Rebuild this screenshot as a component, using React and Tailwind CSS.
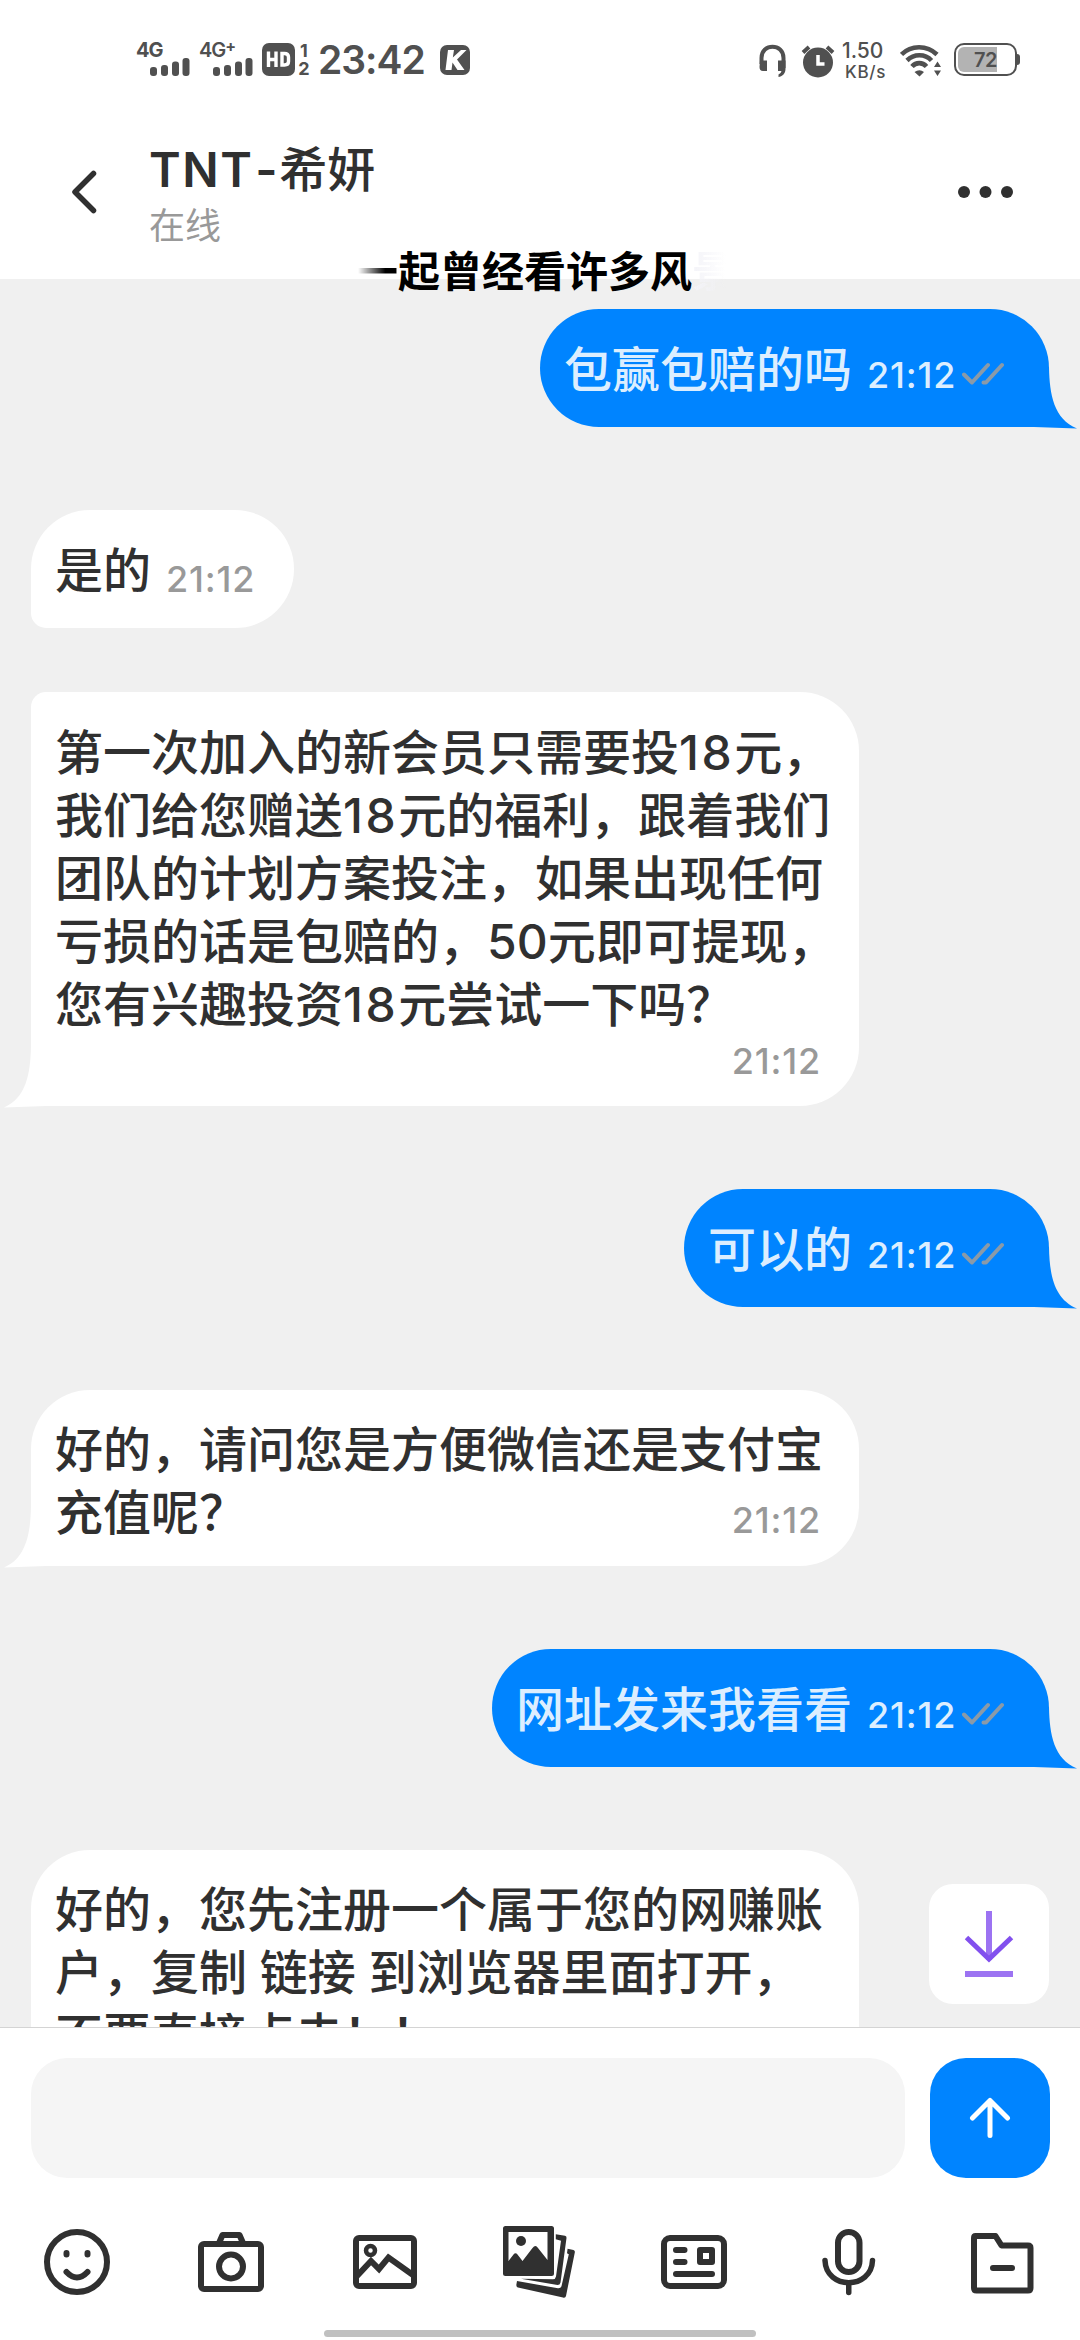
import React from "react";

const FONT = "font-[Inter,'Noto_Sans_CJK_SC',sans-serif]";

function Signal() {
  return (
    <svg className="block h-[18px] w-[40px]" viewBox="0 0 40 18" fill="#505050">
      <rect x="0" y="9" width="7" height="9" rx="3" />
      <rect x="11" y="7" width="7" height="11" rx="3" />
      <rect x="22" y="3.5" width="7" height="14.5" rx="3" />
      <rect x="32.5" y="0" width="7" height="18" rx="3" />
    </svg>
  );
}

function StatusBar() {
  return (
    <div className="flex h-[120px] items-start pl-[136px] pr-[60px] pt-[42px] text-[#505050]">
      <div className="h-[36px] w-[54px] shrink-0">
        <div className="h-4 whitespace-nowrap text-[20px] font-bold leading-4 tracking-[-1px]">4G</div>
        <div className="pl-[14px]"><Signal /></div>
      </div>
      <div className="ml-[9px] h-[36px] w-[54px] shrink-0">
        <div className="flex h-4 whitespace-nowrap text-[20px] font-semibold leading-4 tracking-[-1px]">
          4G<span className="-mt-1 text-[16px] font-bold">+</span>
        </div>
        <div className="pl-[14px]"><Signal /></div>
      </div>
      <svg className="ml-[9px] mt-px block h-[33px] w-[33px] shrink-0" viewBox="0 0 33 33">
        <rect width="33" height="33" rx="7" fill="#505050" />
        <path d="M6.5 8.5V24M14 8.5V24M6.5 16.5H14M20 10.5V22H22.5Q26.5 22 26.5 18.5V14Q26.5 10.5 22.5 10.5Z" fill="none" stroke="#fff" strokeWidth="3.4" />
      </svg>
      <div className="ml-[3px] flex w-3 flex-col items-center text-[18px] font-bold leading-[18px]">
        <span>1</span>
        <span>2</span>
      </div>
      <div className="ml-[8px] w-[122px] shrink-0 whitespace-nowrap text-[39px] font-semibold leading-[35px] tracking-[-1px]">23:42</div>
      <svg className="mt-[3px] block h-[30px] w-[30px] shrink-0" viewBox="0 0 30 30">
        <rect width="30" height="30" rx="7" fill="#505050" />
        <path d="M8 5H14L12.800 12.500L21 5H26.500L17 14.500L24.500 25H17.500L12.500 17.500L11.500 25H5.500Z" fill="#fff" />
      </svg>
      <div className="flex-1" />
      <svg className="mt-[2px] block h-[33px] w-[27px]" viewBox="0 0 27 33" fill="none">
        <path d="M2.5 20V14C2.5 -1 24.500 -1 24.500 14V24" stroke="#505050" strokeWidth="4" />
        <path d="M1 16.500H8V27H4Q.5 27 .5 23ZM19 16.500H26.500V25C26.500 30 23 32.500 19.500 33V30.500Q22 29.500 22.500 27H19Z" fill="#505050" />
      </svg>
      <svg className="ml-[15px] mt-[3px] block h-[33px] w-[34px]" viewBox="0 0 34 33" fill="none">
        <circle cx="17" cy="17.500" r="15" fill="#505050" />
        <path d="M2 7.500L8 2M26 2L32 7.500" stroke="#505050" strokeWidth="4" />
        <path d="M17 10V19H23.500" stroke="#fff" strokeWidth="3.500" />
      </svg>
      <div className="-mt-[4px] ml-[7px] w-[52px] whitespace-nowrap font-medium">
        <div className="text-[21px] leading-[26px]">1.50</div>
        <div className="-mt-[2px] pl-[3px] text-[17px] leading-[21px] tracking-[0.7px]">KB/s</div>
      </div>
      <svg className="ml-[6px] mt-[2px] block h-[33px] w-[42px]" viewBox="0 0 42 33" fill="none">
        <g stroke="#505050" strokeWidth="4.600">
          <path d="M1.500 10.500C11 .8 27 .8 37 10.500" />
          <path d="M7 16.500C14 9.500 25 9.500 31.500 16.500" />
          <path d="M12 22.500C16 18 22.500 18 26.500 22.500" />
        </g>
        <path d="M14.500 28Q19.500 24.500 24 28L19.500 32.500ZM37.500 17.500L41 23H34ZM34 26.500H41L37.500 32Z" fill="#505050" />
      </svg>
      <div className="ml-[12px] mt-px flex items-center">
        <div className="h-[33px] w-[63px] rounded-[10px] border-[2.5px] border-[#505050] p-[2px]">
          <div className="flex h-[25px] w-[39px] items-center rounded-l-[6px] bg-[#b3b3b3] pl-[16px] text-[20px] font-semibold leading-6 tracking-[-0.5px]">72</div>
        </div>
        <div className="h-[11px] w-[3px] rounded-r-sm bg-[#505050]" />
      </div>
    </div>
  );
}

function Header() {
  return (
    <header className="relative z-10 h-[279px] shrink-0 bg-white">
      <StatusBar />
      <div className="flex pl-[70px] pt-[18px]">
        <svg className="mt-[31px] block h-[46px] w-[28px]" viewBox="0 0 28 46" fill="none" stroke="#303030" strokeWidth="5.500" strokeLinecap="round" strokeLinejoin="round">
          <path d="M23.500 4.500L5 23L23.500 41.500" />
        </svg>
        <div className="ml-[51px] w-[500px]">
          <div className="whitespace-nowrap text-[48px] font-medium leading-[64px] text-[#303030]">
            <span className="font-semibold tracking-[1.5px]">TNT<span className="pl-[2px]">-</span></span>希妍
          </div>
          <div className="mt-[1px] text-[36px] leading-[46px] text-[#999]">在线</div>
        </div>
        <svg className="ml-[307px] mt-[46px] block h-[16px] w-[60px]" viewBox="0 0 60 16" fill="#303030">
          <circle cx="8" cy="8" r="6" /><circle cx="29.500" cy="8" r="6" /><circle cx="51" cy="8" r="6" />
        </svg>
      </div>
      <div className="absolute left-[356px] top-[242px] whitespace-nowrap text-[42px] font-bold leading-[60px] text-black">
        <span className="bg-linear-to-r from-transparent from-5% to-black to-70% bg-clip-text text-transparent">一</span>起曾经看许多风<span className="bg-linear-to-r from-[#f3f3f8] to-transparent to-80% bg-clip-text text-transparent">景</span>
      </div>
    </header>
  );
}

function Tail({ mine }) {
  return mine ? (
    <svg className="absolute bottom-[-2px] left-full ml-[-50px] block h-[62px] w-[78px]" viewBox="0 0 78 62" fill="#0084ff">
      <path d="M0 0H50C50.500 28 55 52 78 61.500L35 60H0Z" />
    </svg>
  ) : (
    <svg className="absolute bottom-[-2px] right-full mr-[-50px] block h-[62px] w-[78px] -scale-x-100" viewBox="0 0 78 62" fill="#fff">
      <path d="M0 0H50C50.500 28 55 52 77 61.500L35 60H0Z" />
    </svg>
  );
}

function Line({ text }) {
  return (
    <div className="whitespace-pre">
      {text.split(/(18)/).map((part, i) =>
        part === "18" ? <span key={i} className="tracking-[2.5px]">{part}</span> : part
      )}
    </div>
  );
}

function Sent({ text, className }) {
  return (
    <div className={"relative mr-[31px] flex h-[118px] shrink-0 self-end rounded-[59px] rounded-br-none bg-[#0084ff] pl-[24px] pr-[45px] font-medium text-[#dceeff] " + className}>
      <Tail mine />
      <div className="relative mt-[29px] whitespace-nowrap text-[48px] leading-[63px]">{text}</div>
      <div className="relative ml-[15px] mt-[44px] w-[88px] whitespace-nowrap text-[36px] leading-[44px] tracking-[0.8px]">21:12</div>
      <svg className="relative ml-[7px] mt-[53px] block h-[24px] w-[42px]" viewBox="0 0 42 24" fill="none" stroke="#8a9aa8" strokeWidth="4" strokeLinecap="round" strokeLinejoin="round">
        <path d="M2 12.500L10 20.500L26 3M21.500 20.500L24 20.500L40 3" />
      </svg>
    </div>
  );
}

function Received({ lines, time, tail, className }) {
  return (
    <div className={"relative ml-[31px] shrink-0 self-start bg-white pl-[24px] font-medium text-[#303030] " + className}>
      {tail && <Tail />}
      <div className="relative text-[48px] leading-[63px]">
        {lines.map((line) => (
          <Line key={line} text={line} />
        ))}
      </div>
      {time && <div className={"absolute whitespace-nowrap text-[36px] leading-[44px] tracking-[0.8px] text-[#999] " + time}>21:12</div>}
    </div>
  );
}

function Tool({ children }) {
  return (
    <div className="flex justify-center">
      <svg className="block h-[72px] w-[72px] overflow-visible" viewBox="0 0 72 72" fill="none" stroke="#303030" strokeWidth="6" strokeLinecap="round" strokeLinejoin="round">
        {children}
      </svg>
    </div>
  );
}

function Toolbar() {
  return (
    <div className="mt-[48px] grid grid-cols-7">
      <Tool>
        <circle cx="36" cy="36" r="30" />
        <path d="M25.500 27V28.500M46.500 27V28.500M25.500 46Q36 57 46.500 46" />
      </Tool>
      <Tool>
        <rect x="6" y="18" width="60" height="45" rx="3" />
        <path d="M24 17L27.500 9H44.500L48 17" />
        <circle cx="36" cy="40.500" r="12" />
      </Tool>
      <Tool>
        <rect x="6" y="12" width="58" height="48" rx="3" />
        <circle cx="20.500" cy="24.500" r="4.500" strokeWidth="4.500" />
        <path d="M7 50L21 35L29 43L38.500 31.500L63 49" strokeLinejoin="miter" />
      </Tool>
      <Tool>
        <g fill="#303030" stroke="none">
          <path fillRule="evenodd" d="M1.500 0H47.500Q50 0 50 2.500V47.500Q50 50 47.500 50H1.500Q-1 50 -1 47.500V2.500Q-1 0 1.500 0ZM4.500 6V35L9.500 28.500Q11.500 26 13.500 28.500L18.500 35L28.500 22Q31.500 18 34 22L43.500 34V6Z" />
          <circle cx="17" cy="15" r="5" />
          <path d="M51.800 8.300L61 9.700Q62.800 10.200 62.500 12L56.500 56.500Q56 59 53.500 59L17 52.700L49 53.200Q51.500 53.200 52 50.500L57 14.700L51.800 13.300Z" />
          <path d="M63.600 22.700L69.500 24Q71.200 24.500 70.800 26.500L62 70Q61.400 72.200 59 71.500L14 61.500Q12 61 12.400 58.500L13 55L54 62.300Q57 62.500 57.600 59.700L64.800 28.300L63 27.300Z" />
        </g>
      </Tool>
      <Tool>
        <rect x="6" y="12" width="60" height="48" rx="6" />
        <path d="M18 24H26.500M18 36H26.500M18 48H54M42 24H54V36H42Z" />
      </Tool>
      <Tool>
        <rect x="25" y="6" width="21.500" height="40" rx="10.750" />
        <path d="M12 34.500C13 64 58.500 64 59.500 34.500M35.750 57V66.500" strokeWidth="5.500" />
      </Tool>
      <Tool>
        <path d="M8.500 10H28.500L34.500 19.500H61Q63.500 19.500 63.500 22V62Q63.500 64.500 61 64.500H9.500Q7 64.500 7 62V12Q7 10 8.500 10ZM26 42H45" />
      </Tool>
    </div>
  );
}

export default function App() {
  return (
    <div className={"flex h-[2340px] w-[1080px] flex-col overflow-hidden bg-white " + FONT}>
      <Header />
      <main className="relative flex h-[1748px] shrink-0 flex-col overflow-hidden bg-[#f0f0f0] pt-[30px]">
        <Sent text="包赢包赔的吗" className="w-[509px]" />
        <Received
          lines={["是的"]}
          time="left-[135px] top-[47px]"
          className="mt-[83px] h-[118px] w-[263px] rounded-[59px] rounded-bl-[15px] pt-[29px]"
        />
        <Received
          tail
          lines={[
            "第一次加入的新会员只需要投18元，",
            "我们给您赠送18元的福利，跟着我们",
            "团队的计划方案投注，如果出现任何",
            "亏损的话是包赔的，50元即可提现，",
            "您有兴趣投资18元尝试一下吗？",
          ]}
          time="right-[38px] top-[347px]"
          className="mt-[64px] h-[414px] w-[828px] rounded-[59px] rounded-tl-[15px] rounded-bl-none pt-[29px]"
        />
        <Sent text="可以的" className="mt-[83px] w-[365px]" />
        <Received
          tail
          lines={["好的，请问您是方便微信还是支付宝", "充值呢？"]}
          time="right-[38px] top-[108px]"
          className="mt-[83px] h-[176px] w-[828px] rounded-[59px] rounded-bl-none pt-[28px]"
        />
        <Sent text="网址发来我看看" className="mt-[83px] w-[557px]" />
        <Received
          lines={["好的，您先注册一个属于您的网赚账", "户，复制 链接 到浏览器里面打开，", "不要直接点击！！"]}
          className="mt-[83px] h-[300px] w-[828px] rounded-[59px] pt-[28px]"
        />
        <button className="absolute bottom-[23px] right-[31px] flex h-[120px] w-[120px] items-center justify-center rounded-[24px] bg-white">
          <svg className="block h-[72px] w-[60px]" viewBox="0 0 60 72" fill="none" stroke="#9c73f2" strokeWidth="6">
            <path d="M30 3V52M6 66H54" />
            <path d="M7.500 29.500L30 51L52.500 29.500" stroke="#8250ee" strokeWidth="5" />
          </svg>
        </button>
      </main>
      <footer className="flex-1 border-t border-[#d4d4d4] bg-white pt-[30px]">
        <div className="flex gap-[25px] pl-[31px]">
          <div className="h-[120px] w-[874px] rounded-[36px] bg-[#f5f5f5]" />
          <button className="flex h-[120px] w-[120px] items-center justify-center rounded-[36px] bg-[#0084ff]">
            <svg className="block h-[42px] w-[42px]" viewBox="0 0 42 42" fill="none" stroke="#fff" strokeWidth="5" strokeLinecap="round" strokeLinejoin="round">
              <path d="M21 38.500V3.500M3.500 21L21 3.500L38.500 21" />
            </svg>
          </button>
        </div>
        <Toolbar />
        <div className="mx-auto mt-[32px] h-[7px] w-[432px] rounded-full bg-[#c0c0c0]" />
      </footer>
    </div>
  );
}
